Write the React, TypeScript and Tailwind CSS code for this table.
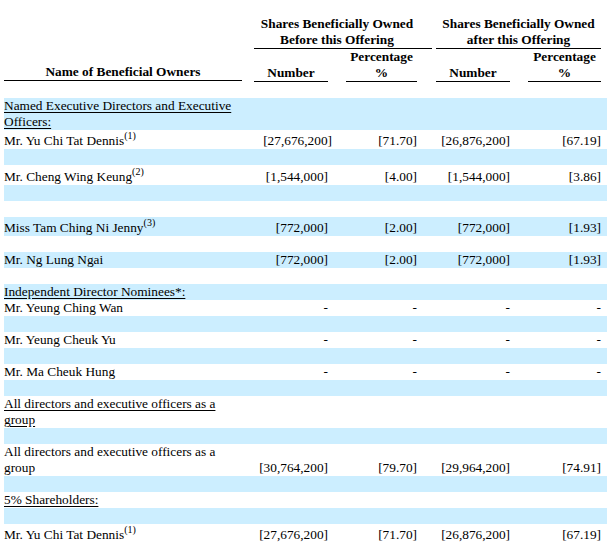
import React from "react";

type Row = {
  name?: React.ReactNode;
  vals?: string[];
  blue: boolean;
  h: string;
  ul?: boolean;
  shift?: boolean;
};

const dash = ["-", "-", "-", "-"];
const yu = ["[27,676,200]", "[71.70]", "[26,876,200]", "[67.19]"];
const jn = ["[772,000]", "[2.00]", "[772,000]", "[1.93]"];

function Sup({ n }: { n: number }) {
  return <span className="relative -top-[6px] text-[10px] leading-none">({n})</span>;
}

const rows: Row[] = [
  { name: "Named Executive Directors and Executive Officers:", ul: true, blue: true, h: "h-[32px]" },
  { name: <>Mr. Yu Chi Tat Dennis<Sup n={1} /></>, vals: yu, blue: false, h: "h-[19px]", shift: true },
  { blue: true, h: "h-[16px]" },
  { name: <>Mr. Cheng Wing Keung<Sup n={2} /></>, vals: ["[1,544,000]", "[4.00]", "[1,544,000]", "[3.86]"], blue: false, h: "h-[20px]" },
  { blue: true, h: "h-[16px]" },
  { blue: false, h: "h-[16px]" },
  { name: <>Miss Tam Ching Ni Jenny<Sup n={3} /></>, vals: jn, blue: true, h: "h-[19px]" },
  { blue: false, h: "h-[16px]" },
  { name: "Mr. Ng Lung Ngai", vals: jn, blue: true, h: "h-[16px]" },
  { blue: false, h: "h-[16px]" },
  { name: "Independent Director Nominees*:", ul: true, blue: true, h: "h-[16px]" },
  { name: "Mr. Yeung Ching Wan", vals: dash, blue: false, h: "h-[16px]" },
  { blue: true, h: "h-[16px]" },
  { name: "Mr. Yeung Cheuk Yu", vals: dash, blue: false, h: "h-[16px]" },
  { blue: true, h: "h-[16px]" },
  { name: "Mr. Ma Cheuk Hung", vals: dash, blue: false, h: "h-[16px]" },
  { blue: true, h: "h-[16px]" },
  { name: "All directors and executive officers as a group", ul: true, blue: false, h: "h-[32px]" },
  { blue: true, h: "h-[16px]" },
  { name: "All directors and executive officers as a group", vals: ["[30,764,200]", "[79.70]", "[29,964,200]", "[74.91]"], blue: false, h: "h-[32px]" },
  { blue: true, h: "h-[16px]" },
  { name: "5% Shareholders:", ul: true, blue: false, h: "h-[16px]" },
  { blue: true, h: "h-[16px]" },
  { name: <>Mr. Yu Chi Tat Dennis<Sup n={1} /></>, vals: yu, blue: false, h: "h-[19px]" },
];

export default function App() {
  return (
    <div
      className="w-[615px] h-[551px] overflow-hidden bg-white text-black text-[13.33px] leading-[16px] pl-[4px] pt-[16px]"
      style={{ fontFamily: '"Liberation Serif", "Times New Roman", serif' }}
    >
      {/* header */}
      <div className="flex w-[603px] font-bold">
        <div className="w-[238px] flex items-end justify-center border-b border-black h-[65px]">
          Name of Beneficial Owners
        </div>
        <div className="w-[12px]" />
        <div className="flex flex-col">
          <div className="flex">
            <div className="w-[178px] border-b border-black text-center pr-[12px]">
              Shares Beneficially Owned
              <br />
              Before this Offering
            </div>
            <div className="w-[4px]" />
            <div className="w-[165px] border-b border-black text-center">
              Shares Beneficially Owned
              <br />
              after this Offering
            </div>
          </div>
          <div className="flex items-end">
            <div className="w-[74px] border-b border-black text-center">Number</div>
            <div className="w-[18px]" />
            <div className="w-[71px] border-b border-black text-center">
              Percentage
              <br />%
            </div>
            <div className="w-[19px]" />
            <div className="w-[74px] border-b border-black text-center">Number</div>
            <div className="w-[18px]" />
            <div className="w-[73px] border-b border-black text-center">
              Percentage
              <br />%
            </div>
          </div>
        </div>
      </div>
      <div className="h-[16px]" />

      {/* body */}
      {rows.map((r, i) => (
        <div key={i} className={`flex items-end w-[603px] ${r.h} ${r.blue ? "bg-[#cceeff]" : ""}`}>
          <div className={`w-[238px] ${r.ul ? "underline underline-offset-2" : ""}`}>{r.name}</div>
          {r.vals && (
            <>
              <div className="w-[12px]" />
              <div className={`w-[74px] text-right whitespace-nowrap ${r.shift ? "relative left-[4px]" : ""}`}>{r.vals[0]}</div>
              <div className="w-[18px]" />
              <div className="w-[71px] text-right">{r.vals[1]}</div>
              <div className="w-[19px]" />
              <div className="w-[74px] text-right whitespace-nowrap">{r.vals[2]}</div>
              <div className="w-[18px]" />
              <div className="w-[73px] text-right">{r.vals[3]}</div>
            </>
          )}
        </div>
      ))}
    </div>
  );
}
